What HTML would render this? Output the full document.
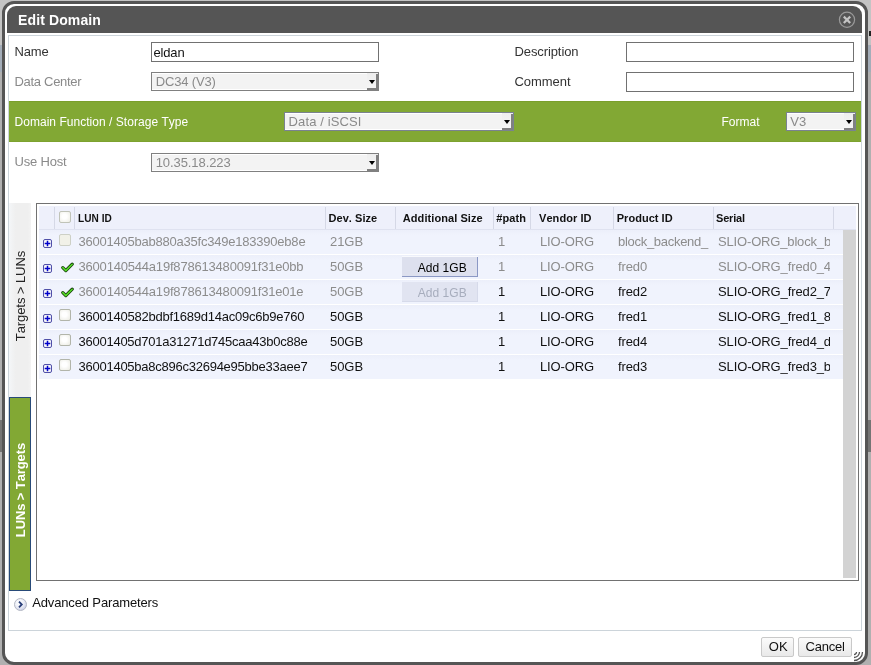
<!DOCTYPE html>
<html><head><meta charset="utf-8"><style>
html,body{margin:0;padding:0;width:871px;height:665px;overflow:hidden;position:relative;background:#b9b9b9}
.a{position:absolute;box-sizing:content-box}
.t{position:absolute;white-space:nowrap;line-height:1;font-family:"Liberation Sans",sans-serif;font-kerning:none}
</style></head><body>
<div id="w" style="position:absolute;left:0;top:0;width:871px;height:665px;will-change:transform;overflow:hidden">
<div class="a" style="left:0px;top:0px;width:871px;height:665px;background:#b0b0b0"></div>
<div class="a" style="left:0px;top:0px;width:871px;height:45px;background:#c4c4c4"></div>
<div class="a" style="left:0px;top:45px;width:871px;height:27px;background:#a3adb9"></div>
<div class="a" style="left:0px;top:420px;width:871px;height:32px;background:#747474"></div>
<div class="a" style="left:869px;top:31px;width:2px;height:5px;background:#222"></div>
<div class="a" style="left:2px;top:1px;width:860px;height:658px;border:3px solid #555;border-radius:12px;background:#fff"></div>
<div class="a" style="left:7px;top:6px;width:855px;height:26.5px;background:#555;border-radius:9px 9px 0 0"></div>
<div class="t" style="left:18px;top:12.75px;font-size:14px;font-weight:bold;color:#fff;letter-spacing:0.122px;">Edit Domain</div>
<svg class="a" style="left:837px;top:10px" width="20" height="20" viewBox="0 0 20 20"><circle cx="10" cy="9.8" r="7.6" fill="none" stroke="#9a9a9a" stroke-width="1.2"/><path d="M6.8 6.6 L13.2 13 M13.2 6.6 L6.8 13" stroke="#c4c4c4" stroke-width="2.2"/></svg>
<div class="a" style="left:8px;top:35px;width:852px;height:594px;border:1px solid #ccd4da;background:#fff"></div>
<div class="t" style="left:14.5px;top:45.00px;font-size:13px;font-weight:normal;color:#333;letter-spacing:-0.172px;">Name</div>
<div class="a" style="left:151px;top:42px;width:226px;height:18px;border:1px solid #717171;background:#fff"></div>
<div class="t" style="left:153.5px;top:46.00px;font-size:13px;font-weight:normal;color:#111;letter-spacing:-0.166px;">eldan</div>
<div class="t" style="left:14.5px;top:74.60px;font-size:13px;font-weight:normal;color:#8a8a8a;letter-spacing:-0.300px;">Data Center</div>
<div class="a" style="left:151px;top:72px;width:226px;height:17px;border:1px solid #808080;background:#f3f3f3"></div><div class="a" style="left:152px;top:73px;width:226px;height:1px;background:#fff"></div><div class="a" style="left:152px;top:89px;width:226px;height:1px;background:#fff"></div><div class="a" style="left:367px;top:73px;width:11px;height:17px;background:linear-gradient(#eeeeee,#f6f6f6)"></div><div class="a" style="left:376px;top:74px;width:2px;height:16px;background:#808080"></div><div class="a" style="left:367px;top:88px;width:11px;height:2px;background:#808080"></div><div class="a" style="left:368.5px;top:80px;width:0;height:0;border-left:3px solid transparent;border-right:3px solid transparent;border-top:4px solid #000"></div><div class="t" style="left:155.7px;top:74.70px;font-size:13px;font-weight:normal;color:#8a8a8a;letter-spacing:-0.158px;">DC34 (V3)</div>
<div class="t" style="left:514.5px;top:45.00px;font-size:13px;font-weight:normal;color:#333;letter-spacing:-0.100px;">Description</div>
<div class="a" style="left:626px;top:42px;width:226px;height:18px;border:1px solid #717171;background:#fff"></div>
<div class="t" style="left:514.5px;top:75.00px;font-size:13px;font-weight:normal;color:#333;letter-spacing:-0.051px;">Comment</div>
<div class="a" style="left:626px;top:72px;width:226px;height:18px;border:1px solid #717171;background:#fff"></div>
<div class="a" style="left:9px;top:101px;width:852px;height:41px;background:#82a834"></div>
<div class="a" style="left:9px;top:101px;width:852px;height:1px;background:#7a9f2c"></div>
<div class="a" style="left:9px;top:141px;width:852px;height:1px;background:#7da22f"></div>
<div class="t" style="left:14.5px;top:115.84px;font-size:12px;font-weight:normal;color:#fff;letter-spacing:0.034px;">Domain Function / Storage Type</div>
<div class="a" style="left:284px;top:112px;width:228px;height:17px;border:1px solid #7a8290;background:#f3f3f3"></div><div class="a" style="left:285px;top:113px;width:228px;height:1px;background:#fff"></div><div class="a" style="left:285px;top:129px;width:228px;height:1px;background:#fff"></div><div class="a" style="left:502px;top:113px;width:11px;height:17px;background:linear-gradient(#eeeeee,#f6f6f6)"></div><div class="a" style="left:511px;top:114px;width:2px;height:16px;background:#808080"></div><div class="a" style="left:502px;top:128px;width:11px;height:2px;background:#808080"></div><div class="a" style="left:503.5px;top:120px;width:0;height:0;border-left:3px solid transparent;border-right:3px solid transparent;border-top:4px solid #000"></div><div class="t" style="left:288.6px;top:114.70px;font-size:13px;font-weight:normal;color:#8a8a8a;letter-spacing:0.122px;">Data / iSCSI</div>
<div class="t" style="left:721.5px;top:115.84px;font-size:12px;font-weight:normal;color:#fff;letter-spacing:0.000px;">Format</div>
<div class="a" style="left:786px;top:112px;width:68px;height:17px;border:1px solid #7a8290;background:#f3f3f3"></div><div class="a" style="left:787px;top:113px;width:68px;height:1px;background:#fff"></div><div class="a" style="left:787px;top:129px;width:68px;height:1px;background:#fff"></div><div class="a" style="left:844px;top:113px;width:11px;height:17px;background:linear-gradient(#eeeeee,#f6f6f6)"></div><div class="a" style="left:853px;top:114px;width:2px;height:16px;background:#808080"></div><div class="a" style="left:844px;top:128px;width:11px;height:2px;background:#808080"></div><div class="a" style="left:845.5px;top:120px;width:0;height:0;border-left:3px solid transparent;border-right:3px solid transparent;border-top:4px solid #000"></div><div class="t" style="left:790.3px;top:114.70px;font-size:13px;font-weight:normal;color:#8a8a8a;letter-spacing:0.047px;">V3</div>
<div class="t" style="left:14.5px;top:155.00px;font-size:13px;font-weight:normal;color:#8a8a8a;letter-spacing:-0.184px;">Use Host</div>
<div class="a" style="left:151px;top:153px;width:226px;height:17px;border:1px solid #808080;background:#f3f3f3"></div><div class="a" style="left:152px;top:154px;width:226px;height:1px;background:#fff"></div><div class="a" style="left:152px;top:170px;width:226px;height:1px;background:#fff"></div><div class="a" style="left:367px;top:154px;width:11px;height:17px;background:linear-gradient(#eeeeee,#f6f6f6)"></div><div class="a" style="left:376px;top:155px;width:2px;height:16px;background:#808080"></div><div class="a" style="left:367px;top:169px;width:11px;height:2px;background:#808080"></div><div class="a" style="left:368.5px;top:161px;width:0;height:0;border-left:3px solid transparent;border-right:3px solid transparent;border-top:4px solid #000"></div><div class="t" style="left:155.7px;top:155.70px;font-size:13px;font-weight:normal;color:#8a8a8a;letter-spacing:-0.078px;">10.35.18.223</div>
<div class="a" style="left:9px;top:203px;width:22px;height:194px;background:linear-gradient(90deg,#f4f6f8,#efefef 30%,#efefef 85%,#f3f3f3)"></div>
<div class="a" style="left:9px;top:397px;width:20px;height:192px;background:#82a834;border:1px solid #284a78"></div>
<div class="t" style="left:-39.5px;top:288.2px;width:120px;height:16px;line-height:16px;text-align:center;font-size:13px;font-weight:normal;color:#222;transform:rotate(-90deg);letter-spacing:-0.077px;text-indent:-0.077px">Targets &gt; LUNs</div>
<div class="t" style="left:-39.5px;top:481.6px;width:120px;height:16px;line-height:16px;text-align:center;font-size:13px;font-weight:bold;color:#fff;transform:rotate(-90deg);letter-spacing:-0.108px;text-indent:-0.108px">LUNs &gt; Targets</div>
<div class="a" style="left:36px;top:203px;width:821px;height:376px;border:1px solid #717171;background:#fff"></div>
<div class="a" style="left:39px;top:206px;width:817px;height:23px;background:#eef0fb"></div>
<div class="a" style="left:39px;top:229px;width:817px;height:1px;background:#dfe2f0"></div>
<div class="a" style="left:54px;top:207px;width:1px;height:22px;background:#d5d8e6"></div>
<div class="a" style="left:74px;top:207px;width:1px;height:22px;background:#d5d8e6"></div>
<div class="a" style="left:325px;top:207px;width:1px;height:22px;background:#d5d8e6"></div>
<div class="a" style="left:395px;top:207px;width:1px;height:22px;background:#d5d8e6"></div>
<div class="a" style="left:493px;top:207px;width:1px;height:22px;background:#d5d8e6"></div>
<div class="a" style="left:530px;top:207px;width:1px;height:22px;background:#d5d8e6"></div>
<div class="a" style="left:613px;top:207px;width:1px;height:22px;background:#d5d8e6"></div>
<div class="a" style="left:713px;top:207px;width:1px;height:22px;background:#d5d8e6"></div>
<div class="a" style="left:833px;top:207px;width:1px;height:22px;background:#d5d8e6"></div>
<div class="a" style="left:59px;top:211px;width:10px;height:10px;border:1px solid #c0c3b8;border-radius:2px;background:radial-gradient(circle at 45% 45%,#ffffff 30%,#ecece4)"></div>
<div class="t" style="left:78px;top:212.69px;font-size:11px;font-weight:bold;color:#111;letter-spacing:0.057px;transform:scaleX(0.915);transform-origin:0 0;">LUN ID</div>
<div class="t" style="left:328.5px;top:212.69px;font-size:11px;font-weight:bold;color:#111;letter-spacing:0.052px;">Dev. Size</div>
<div class="t" style="left:402.8px;top:212.69px;font-size:11px;font-weight:bold;color:#111;letter-spacing:0.075px;">Additional Size</div>
<div class="t" style="left:496.2px;top:212.69px;font-size:11px;font-weight:bold;color:#111;letter-spacing:0.131px;">#path</div>
<div class="t" style="left:539px;top:212.69px;font-size:11px;font-weight:bold;color:#111;letter-spacing:0.071px;">Vendor ID</div>
<div class="t" style="left:616.7px;top:212.69px;font-size:11px;font-weight:bold;color:#111;letter-spacing:0.037px;">Product ID</div>
<div class="t" style="left:716px;top:212.69px;font-size:11px;font-weight:bold;color:#111;letter-spacing:-0.167px;">Serial</div>
<div class="a" style="left:39px;top:230px;width:804px;height:24px;background:linear-gradient(#eceffa,#f0f3fd 5px)"></div>
<svg class="a" style="left:43px;top:239px" width="9" height="9" viewBox="0 0 9 9"><rect x="0.5" y="0.5" width="8" height="8" rx="1.5" fill="#f4f4f8" stroke="#5050a8"/><path d="M1.7 4.5H7.3M4.5 1.7V7.3" stroke="#0000cc" stroke-width="1.5"/></svg>
<div class="a" style="left:59px;top:234px;width:10px;height:10px;border:1px solid #cdd0c6;border-radius:2px;background:#f1f1e8"></div>
<div class="t" style="left:78.5px;top:234.80px;font-size:13px;font-weight:normal;color:#8c8c8c;letter-spacing:-0.223px;">36001405bab880a35fc349e183390eb8e</div>
<div class="t" style="left:330px;top:234.80px;font-size:13px;font-weight:normal;color:#8c8c8c;letter-spacing:-0.062px;">21GB</div>
<div class="t" style="left:498px;top:234.80px;font-size:13px;font-weight:normal;color:#8c8c8c;letter-spacing:-0.234px;">1</div>
<div class="t" style="left:540px;top:234.80px;font-size:13px;font-weight:normal;color:#8c8c8c;letter-spacing:-0.127px;">LIO-ORG</div>
<div class="t" style="left:618px;top:234.80px;font-size:13px;font-weight:normal;color:#8c8c8c;letter-spacing:-0.286px;">block_backend_</div>
<div class="a" style="left:714px;top:230px;width:116px;height:24px;overflow:hidden"><div class="t" style="left:4px;top:4.80px;font-size:13px;font-weight:normal;color:#8c8c8c;letter-spacing:-0.164px;">SLIO-ORG_block_b</div></div>
<div class="a" style="left:39px;top:255px;width:804px;height:24px;background:linear-gradient(#eceffa,#f0f3fd 5px)"></div>
<svg class="a" style="left:43px;top:264px" width="9" height="9" viewBox="0 0 9 9"><rect x="0.5" y="0.5" width="8" height="8" rx="1.5" fill="#f4f4f8" stroke="#5050a8"/><path d="M1.7 4.5H7.3M4.5 1.7V7.3" stroke="#0000cc" stroke-width="1.5"/></svg>
<svg class="a" style="left:61px;top:262px" width="13" height="11" viewBox="0 0 13 11"><path d="M1.8 5.6 L4.8 8.6 L11.2 2.2" fill="none" stroke="#173d0c" stroke-width="3.2" stroke-linecap="round" stroke-linejoin="round"/><path d="M1.8 5.6 L4.8 8.6 L11.2 2.2" fill="none" stroke="#55dd28" stroke-width="1.5" stroke-linecap="round" stroke-linejoin="round"/></svg>
<div class="t" style="left:78.5px;top:259.80px;font-size:13px;font-weight:normal;color:#8c8c8c;letter-spacing:-0.196px;">3600140544a19f878613480091f31e0bb</div>
<div class="t" style="left:330px;top:259.80px;font-size:13px;font-weight:normal;color:#8c8c8c;letter-spacing:-0.062px;">50GB</div>
<div class="a" style="left:402px;top:257px;width:75px;height:19px;background:#dde0ee;border-right:1px solid #8b98c4;border-bottom:1px solid #8b98c4"></div>
<div class="a" style="left:402px;top:256px;width:76px;height:1px;background:#f8f9fd"></div>
<div class="t" style="left:417.7px;top:262.04px;font-size:12px;font-weight:normal;color:#000;letter-spacing:0.047px;">Add 1GB</div>
<div class="t" style="left:498px;top:259.80px;font-size:13px;font-weight:normal;color:#8c8c8c;letter-spacing:-0.234px;">1</div>
<div class="t" style="left:540px;top:259.80px;font-size:13px;font-weight:normal;color:#8c8c8c;letter-spacing:-0.127px;">LIO-ORG</div>
<div class="t" style="left:618px;top:259.80px;font-size:13px;font-weight:normal;color:#8c8c8c;letter-spacing:-0.128px;">fred0</div>
<div class="a" style="left:714px;top:255px;width:116px;height:24px;overflow:hidden"><div class="t" style="left:4px;top:4.80px;font-size:13px;font-weight:normal;color:#8c8c8c;letter-spacing:-0.119px;">SLIO-ORG_fred0_4</div></div>
<div class="a" style="left:39px;top:280px;width:804px;height:24px;background:linear-gradient(#eceffa,#f0f3fd 5px)"></div>
<svg class="a" style="left:43px;top:289px" width="9" height="9" viewBox="0 0 9 9"><rect x="0.5" y="0.5" width="8" height="8" rx="1.5" fill="#f4f4f8" stroke="#5050a8"/><path d="M1.7 4.5H7.3M4.5 1.7V7.3" stroke="#0000cc" stroke-width="1.5"/></svg>
<svg class="a" style="left:61px;top:287px" width="13" height="11" viewBox="0 0 13 11"><path d="M1.8 5.6 L4.8 8.6 L11.2 2.2" fill="none" stroke="#173d0c" stroke-width="3.2" stroke-linecap="round" stroke-linejoin="round"/><path d="M1.8 5.6 L4.8 8.6 L11.2 2.2" fill="none" stroke="#55dd28" stroke-width="1.5" stroke-linecap="round" stroke-linejoin="round"/></svg>
<div class="t" style="left:78.5px;top:284.80px;font-size:13px;font-weight:normal;color:#8c8c8c;letter-spacing:-0.196px;">3600140544a19f878613480091f31e01e</div>
<div class="t" style="left:330px;top:284.80px;font-size:13px;font-weight:normal;color:#8c8c8c;letter-spacing:-0.062px;">50GB</div>
<div class="a" style="left:402px;top:282px;width:75px;height:19px;background:#e1e4f1;border-right:1px solid #d6daea;border-bottom:1px solid #d6daea"></div>
<div class="t" style="left:417.7px;top:287.04px;font-size:12px;font-weight:normal;color:#a7adbd;letter-spacing:0.047px;">Add 1GB</div>
<div class="t" style="left:498px;top:284.80px;font-size:13px;font-weight:normal;color:#111;letter-spacing:-0.234px;">1</div>
<div class="t" style="left:540px;top:284.80px;font-size:13px;font-weight:normal;color:#111;letter-spacing:-0.127px;">LIO-ORG</div>
<div class="t" style="left:618px;top:284.80px;font-size:13px;font-weight:normal;color:#111;letter-spacing:-0.128px;">fred2</div>
<div class="a" style="left:714px;top:280px;width:116px;height:24px;overflow:hidden"><div class="t" style="left:4px;top:4.80px;font-size:13px;font-weight:normal;color:#111;letter-spacing:-0.119px;">SLIO-ORG_fred2_7</div></div>
<div class="a" style="left:39px;top:305px;width:804px;height:24px;background:linear-gradient(#eceffa,#f0f3fd 5px)"></div>
<svg class="a" style="left:43px;top:314px" width="9" height="9" viewBox="0 0 9 9"><rect x="0.5" y="0.5" width="8" height="8" rx="1.5" fill="#f4f4f8" stroke="#5050a8"/><path d="M1.7 4.5H7.3M4.5 1.7V7.3" stroke="#0000cc" stroke-width="1.5"/></svg>
<div class="a" style="left:59px;top:309px;width:10px;height:10px;border:1px solid #b2b5aa;border-radius:2px;background:radial-gradient(circle at 45% 45%,#ffffff 30%,#e9e9e0)"></div>
<div class="t" style="left:78.5px;top:309.80px;font-size:13px;font-weight:normal;color:#111;letter-spacing:-0.232px;">3600140582bdbf1689d14ac09c6b9e760</div>
<div class="t" style="left:330px;top:309.80px;font-size:13px;font-weight:normal;color:#111;letter-spacing:-0.062px;">50GB</div>
<div class="t" style="left:498px;top:309.80px;font-size:13px;font-weight:normal;color:#111;letter-spacing:-0.234px;">1</div>
<div class="t" style="left:540px;top:309.80px;font-size:13px;font-weight:normal;color:#111;letter-spacing:-0.127px;">LIO-ORG</div>
<div class="t" style="left:618px;top:309.80px;font-size:13px;font-weight:normal;color:#111;letter-spacing:-0.128px;">fred1</div>
<div class="a" style="left:714px;top:305px;width:116px;height:24px;overflow:hidden"><div class="t" style="left:4px;top:4.80px;font-size:13px;font-weight:normal;color:#111;letter-spacing:-0.119px;">SLIO-ORG_fred1_8</div></div>
<div class="a" style="left:39px;top:330px;width:804px;height:24px;background:linear-gradient(#eceffa,#f0f3fd 5px)"></div>
<svg class="a" style="left:43px;top:339px" width="9" height="9" viewBox="0 0 9 9"><rect x="0.5" y="0.5" width="8" height="8" rx="1.5" fill="#f4f4f8" stroke="#5050a8"/><path d="M1.7 4.5H7.3M4.5 1.7V7.3" stroke="#0000cc" stroke-width="1.5"/></svg>
<div class="a" style="left:59px;top:334px;width:10px;height:10px;border:1px solid #b2b5aa;border-radius:2px;background:radial-gradient(circle at 45% 45%,#ffffff 30%,#e9e9e0)"></div>
<div class="t" style="left:78.5px;top:334.80px;font-size:13px;font-weight:normal;color:#111;letter-spacing:-0.250px;">36001405d701a31271d745caa43b0c88e</div>
<div class="t" style="left:330px;top:334.80px;font-size:13px;font-weight:normal;color:#111;letter-spacing:-0.062px;">50GB</div>
<div class="t" style="left:498px;top:334.80px;font-size:13px;font-weight:normal;color:#111;letter-spacing:-0.234px;">1</div>
<div class="t" style="left:540px;top:334.80px;font-size:13px;font-weight:normal;color:#111;letter-spacing:-0.127px;">LIO-ORG</div>
<div class="t" style="left:618px;top:334.80px;font-size:13px;font-weight:normal;color:#111;letter-spacing:-0.128px;">fred4</div>
<div class="a" style="left:714px;top:330px;width:116px;height:24px;overflow:hidden"><div class="t" style="left:4px;top:4.80px;font-size:13px;font-weight:normal;color:#111;letter-spacing:-0.119px;">SLIO-ORG_fred4_d</div></div>
<div class="a" style="left:39px;top:355px;width:804px;height:24px;background:linear-gradient(#eceffa,#f0f3fd 5px)"></div>
<svg class="a" style="left:43px;top:364px" width="9" height="9" viewBox="0 0 9 9"><rect x="0.5" y="0.5" width="8" height="8" rx="1.5" fill="#f4f4f8" stroke="#5050a8"/><path d="M1.7 4.5H7.3M4.5 1.7V7.3" stroke="#0000cc" stroke-width="1.5"/></svg>
<div class="a" style="left:59px;top:359px;width:10px;height:10px;border:1px solid #b2b5aa;border-radius:2px;background:radial-gradient(circle at 45% 45%,#ffffff 30%,#e9e9e0)"></div>
<div class="t" style="left:78.5px;top:359.80px;font-size:13px;font-weight:normal;color:#111;letter-spacing:-0.250px;">36001405ba8c896c32694e95bbe33aee7</div>
<div class="t" style="left:330px;top:359.80px;font-size:13px;font-weight:normal;color:#111;letter-spacing:-0.062px;">50GB</div>
<div class="t" style="left:498px;top:359.80px;font-size:13px;font-weight:normal;color:#111;letter-spacing:-0.234px;">1</div>
<div class="t" style="left:540px;top:359.80px;font-size:13px;font-weight:normal;color:#111;letter-spacing:-0.127px;">LIO-ORG</div>
<div class="t" style="left:618px;top:359.80px;font-size:13px;font-weight:normal;color:#111;letter-spacing:-0.128px;">fred3</div>
<div class="a" style="left:714px;top:355px;width:116px;height:24px;overflow:hidden"><div class="t" style="left:4px;top:4.80px;font-size:13px;font-weight:normal;color:#111;letter-spacing:-0.119px;">SLIO-ORG_fred3_b</div></div>
<div class="a" style="left:843px;top:230px;width:13px;height:348px;background:#d3d3d3"></div>
<svg class="a" style="left:13px;top:597px" width="15" height="15" viewBox="0 0 15 15"><defs><radialGradient id="g" cx="0.4" cy="0.35" r="0.7"><stop offset="0" stop-color="#fff"/><stop offset="0.5" stop-color="#eef0f8"/><stop offset="1" stop-color="#c8cce4"/></radialGradient></defs><circle cx="7.5" cy="7.5" r="6" fill="url(#g)" stroke="#b4b8c4" stroke-width="1"/><path d="M6 4.6 L8.8 7.5 L6 10.4" fill="none" stroke="#2a3f7a" stroke-width="1.8"/></svg>
<div class="t" style="left:32.2px;top:595.70px;font-size:13px;font-weight:normal;color:#111;letter-spacing:-0.140px;">Advanced Parameters</div>
<div class="a" style="left:761px;top:637px;width:31px;height:18px;border:1px solid #c9c9c9;border-radius:2px;background:linear-gradient(#fbfbfb,#e9e9e9)"></div><div class="t" style="left:768.8px;top:639.80px;font-size:13px;font-weight:normal;color:#111;letter-spacing:0.109px;">OK</div>
<div class="a" style="left:798px;top:637px;width:52px;height:18px;border:1px solid #c9c9c9;border-radius:2px;background:linear-gradient(#fbfbfb,#e9e9e9)"></div><div class="t" style="left:805.6px;top:639.80px;font-size:13px;font-weight:normal;color:#111;letter-spacing:-0.247px;">Cancel</div>
<svg class="a" style="left:850px;top:648px" width="14" height="14" viewBox="0 0 14 14"><path d="M6.5 4 A2.5 2.5 0 0 1 4 6.5 M9.5 4 A5.5 5.5 0 0 1 4 9.5 M12.5 4 A8.5 8.5 0 0 1 4 12.5" fill="none" stroke="#555" stroke-width="1.3"/></svg>
</div>
</body></html>
